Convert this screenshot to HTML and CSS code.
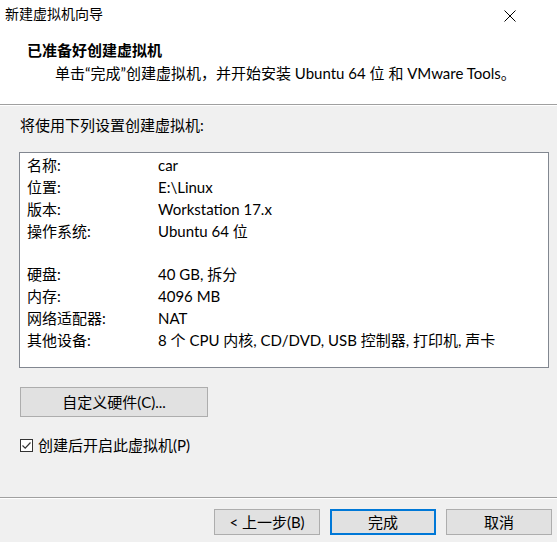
FILE: index.html
```html
<!DOCTYPE html>
<html lang="zh-CN">
<head>
<meta charset="utf-8">
<title>新建虚拟机向导</title>
<link rel="stylesheet" href="styles.css">
</head>
<body>
<div class="dialog">
  <div class="header">
    <div class="titlebar">
      <span class="title">新建虚拟机向导</span>
      <svg class="close" width="12" height="12" viewBox="0 0 12 12"><path d="M0.5 0.5L11.5 11.5M11.5 0.5L0.5 11.5" stroke="#000" stroke-width="1" fill="none"/></svg>
    </div>
    <div class="head-title">已准备好创建虚拟机</div>
    <div class="head-sub">单击“完成”创建虚拟机，并开始安装 Ubuntu 64 位 和 VMware Tools。</div>
  </div>
  <div class="sep"></div>
  <div class="main">
    <div class="intro">将使用下列设置创建虚拟机:</div>
    <div class="listbox">
      <div class="row"><span>名称:</span><span>car</span></div>
      <div class="row"><span>位置:</span><span>E:\Linux</span></div>
      <div class="row"><span>版本:</span><span>Workstation 17.x</span></div>
      <div class="row"><span>操作系统:</span><span>Ubuntu 64 位</span></div>
      <div class="row blank"></div>
      <div class="row"><span>硬盘:</span><span>40 GB, 拆分</span></div>
      <div class="row"><span>内存:</span><span>4096 MB</span></div>
      <div class="row"><span>网络适配器:</span><span>NAT</span></div>
      <div class="row"><span>其他设备:</span><span>8 个 CPU 内核, CD/DVD, USB 控制器, 打印机, 声卡</span></div>
    </div>
    <button class="btn custom">自定义硬件(C)...</button>
    <label class="check">
      <span class="box"><svg width="11" height="11" viewBox="0 0 11 11"><path d="M1.5 5.5L4.2 8.2L9.5 2.5" stroke="#333" stroke-width="1.2" fill="none"/></svg></span>
      <span>创建后开启此虚拟机(P)</span>
    </label>
  </div>
  <div class="sep bottom"></div>
  <div class="footer">
    <button class="btn foot">&lt; 上一步(B)</button>
    <button class="btn foot primary">完成</button>
    <button class="btn foot">取消</button>
  </div>
</div>
</body>
</html>
```

FILE: styles.css
```css
html, body {
  margin: 0;
  padding: 0;
}
body {
  width: 557px;
  height: 542px;
  background: #f0f0f0;
  font-family: "Lato", "Noto Sans CJK SC", sans-serif;
  font-size: 15px;
  color: #000;
  overflow: hidden;
}
.dialog {
  display: flex;
  flex-direction: column;
  height: 542px;
}
.header {
  background: #fff;
  height: 104px;
  box-sizing: border-box;
}
.titlebar {
  height: 30px;
  display: flex;
  align-items: center;
  justify-content: space-between;
  padding: 0 41px 0 5px;
}
.title {
  font-size: 14px;
  line-height: 30px;
  margin-top: -2px;
}
.close {
  display: block;
  margin-top: 1px;
}
.head-title {
  font-weight: bold;
  padding-left: 27px;
  line-height: 22px;
  margin-top: 9px;
}
.head-sub {
  padding-left: 55px;
  line-height: 22px;
  margin-top: 1px;
}
.sep {
  height: 1px;
  background: #a0a0a0;
  border-bottom: 1px solid #fff;
}
.main {
  padding: 0 0 0 19px;
  flex: 1;
  display: flex;
  flex-direction: column;
  align-items: flex-start;
}
.intro {
  line-height: 22px;
  margin-top: 8px;
  padding-left: 1px;
}
.listbox {
  margin-top: 16px;
  width: 530px;
  height: 216px;
  box-sizing: border-box;
  border: 1px solid #828790;
  background: #fff;
  padding: 2px 0 0 7px;
}
.row {
  display: grid;
  grid-template-columns: 131px 1fr;
  line-height: 21.9px;
  height: 21.9px;
  white-space: nowrap;
}
.btn {
  font-family: inherit;
  font-size: 15px;
  color: #000;
  background: #e1e1e1;
  border: 1px solid #adadad;
  padding: 0;
  margin: 0;
  box-sizing: border-box;
  line-height: 20px;
}
.custom {
  margin-top: 19px;
  margin-left: 1px;
  width: 188px;
  height: 30px;
}
.check {
  display: flex;
  align-items: center;
  margin-top: 17px;
  margin-left: 1px;
  line-height: 22px;
}
.box {
  width: 13px;
  height: 13px;
  box-sizing: border-box;
  border: 1px solid #333;
  background: #fff;
  display: flex;
  align-items: center;
  justify-content: center;
  margin-right: 5px;
}
.box svg {
  display: block;
}
.footer {
  height: 43px;
  display: flex;
  justify-content: flex-end;
  gap: 10px;
  padding: 10px 5px 0 0;
  box-sizing: border-box;
}
.foot {
  width: 106px;
  height: 26px;
}
.primary {
  border: 2px solid #0078d7;
}
```
